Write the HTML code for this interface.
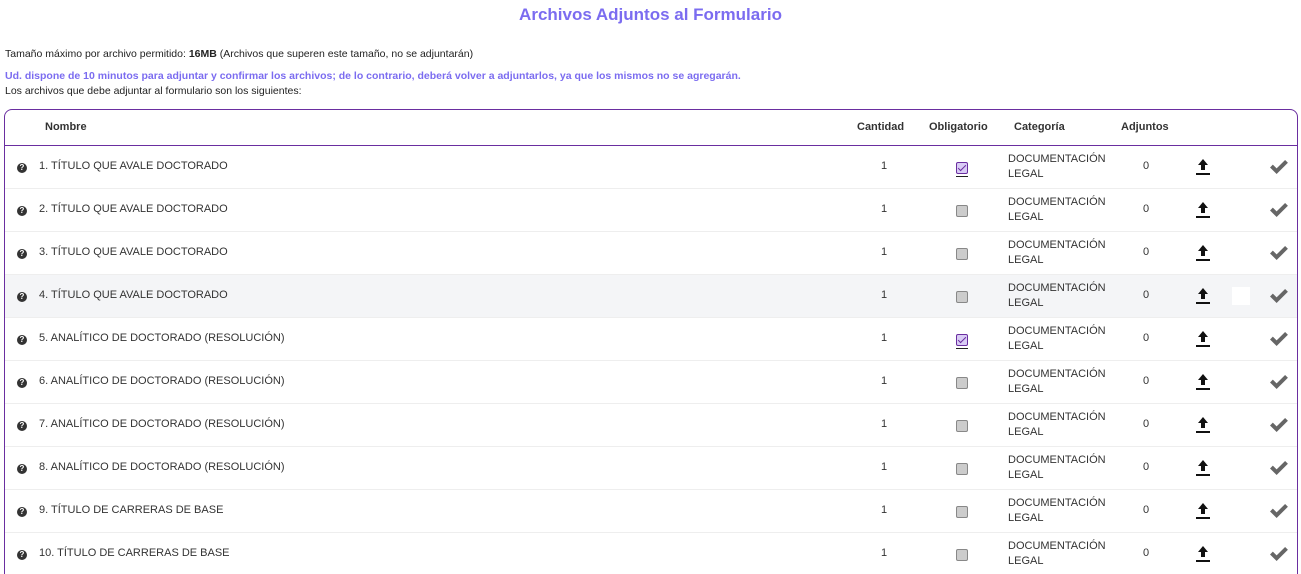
<!DOCTYPE html>
<html><head><meta charset="utf-8"><style>
*{margin:0;padding:0;box-sizing:border-box}
html,body{width:1301px;height:574px;overflow:hidden}
body{background:#fff;font-family:"Liberation Sans",sans-serif;color:#222;position:relative}
.a{position:absolute;white-space:nowrap}
h1{position:absolute;left:0;width:1301px;top:5px;text-align:center;font-size:17px;font-weight:bold;color:#7b6cf0}
.s{font-size:10.5px;color:#222}
.box{position:absolute;left:4px;top:109px;width:1294px;height:480px;border:1px solid #6a2ea0;border-radius:8px}
.hd{position:absolute;left:4px;top:145px;width:1294px;border-top:1px solid #6a2ea0}
.th{font-size:11px;font-weight:bold;color:#333;top:121px}
.row{position:absolute;left:5px;width:1292px;height:43px;border-bottom:1px solid #eee}
.row .t{position:absolute;font-size:11px;color:#333;white-space:nowrap}
.q{position:absolute;left:12px;top:17px;width:10px;height:10px;border-radius:50%;background:#333;color:#fff;font-size:8px;font-weight:bold;text-align:center;line-height:10px}
.cb{position:absolute;left:951px;top:16px;width:12px;height:12px;background:#ccc;border:1px solid #888;border-radius:2px}
.cb.on{background:#d9ccf5;border-color:#6a2ea0}
.cb.on:after{content:"";position:absolute;left:3px;top:0px;width:3px;height:7px;border:solid #6a2ea0;border-width:0 1.5px 1.5px 0;transform:rotate(45deg)}
.cb.on:before{content:"";position:absolute;left:-1px;top:13px;width:12px;height:1px;background:#222}
</style></head><body>
<h1>Archivos Adjuntos al Formulario</h1>
<div class="a s" style="left:5px;top:48px">Tamaño máximo por archivo permitido: <b>16MB</b> (Archivos que superen este tamaño, no se adjuntarán)</div>
<div class="a s" style="left:5px;top:70px;color:#7b6cf0;font-weight:bold">Ud. dispone de 10 minutos para adjuntar y confirmar los archivos; de lo contrario, deberá volver a adjuntarlos, ya que los mismos no se agregarán.</div>
<div class="a s" style="left:5px;top:85px">Los archivos que debe adjuntar al formulario son los siguientes:</div>
<div class="box"></div>
<div class="hd"></div>
<div class="a th" style="left:45px">Nombre</div>
<div class="a th" style="left:857px">Cantidad</div>
<div class="a th" style="left:929px">Obligatorio</div>
<div class="a th" style="left:1014px">Categoría</div>
<div class="a th" style="left:1121px">Adjuntos</div>
<div id="rows"></div>
<script>
var names=["1. TÍTULO QUE AVALE DOCTORADO","2. TÍTULO QUE AVALE DOCTORADO","3. TÍTULO QUE AVALE DOCTORADO","4. TÍTULO QUE AVALE DOCTORADO","5. ANALÍTICO DE DOCTORADO (RESOLUCIÓN)","6. ANALÍTICO DE DOCTORADO (RESOLUCIÓN)","7. ANALÍTICO DE DOCTORADO (RESOLUCIÓN)","8. ANALÍTICO DE DOCTORADO (RESOLUCIÓN)","9. TÍTULO DE CARRERAS DE BASE","10. TÍTULO DE CARRERAS DE BASE"];
var h="";
names.forEach(function(n,i){
 var top=146+i*43;
 h+='<div class="row" style="top:'+top+'px;'+(i==3?'background:#f4f5f7':'')+'">'+
 '<div class="q">?</div>'+
 '<div class="t" style="left:34px;top:14px">'+n+'</div>'+
 '<div class="t" style="left:876px;top:14px">1</div>'+
 '<div class="cb'+(i==0||i==4?' on':'')+'"></div>'+
 '<div class="t" style="left:1003px;top:6px;line-height:15px">DOCUMENTACIÓN<br>LEGAL</div>'+
 '<div class="t" style="left:1138px;top:14px">0</div>'+
 '<svg style="position:absolute;left:1190px;top:11px" width="16" height="20" viewBox="0 0 16 20"><path d="M8 2 L3 8 H6 V13 H10 V8 H13 Z" fill="#111"/><rect x="1" y="16" width="14" height="2" fill="#111"/></svg>'+
 (i==3?'<div style="position:absolute;left:1227px;top:12px;width:18px;height:18px;background:#fff"></div>':'')+
 '<svg style="position:absolute;left:1264px;top:13px" width="19" height="16" viewBox="0 0 20 17"><path d="M1 9 L4 6 L8 10 L17 1 L20 4 L8 16 Z" fill="#666"/></svg>'+
 '</div>';
});
document.getElementById("rows").innerHTML=h;
</script>
</body></html>
